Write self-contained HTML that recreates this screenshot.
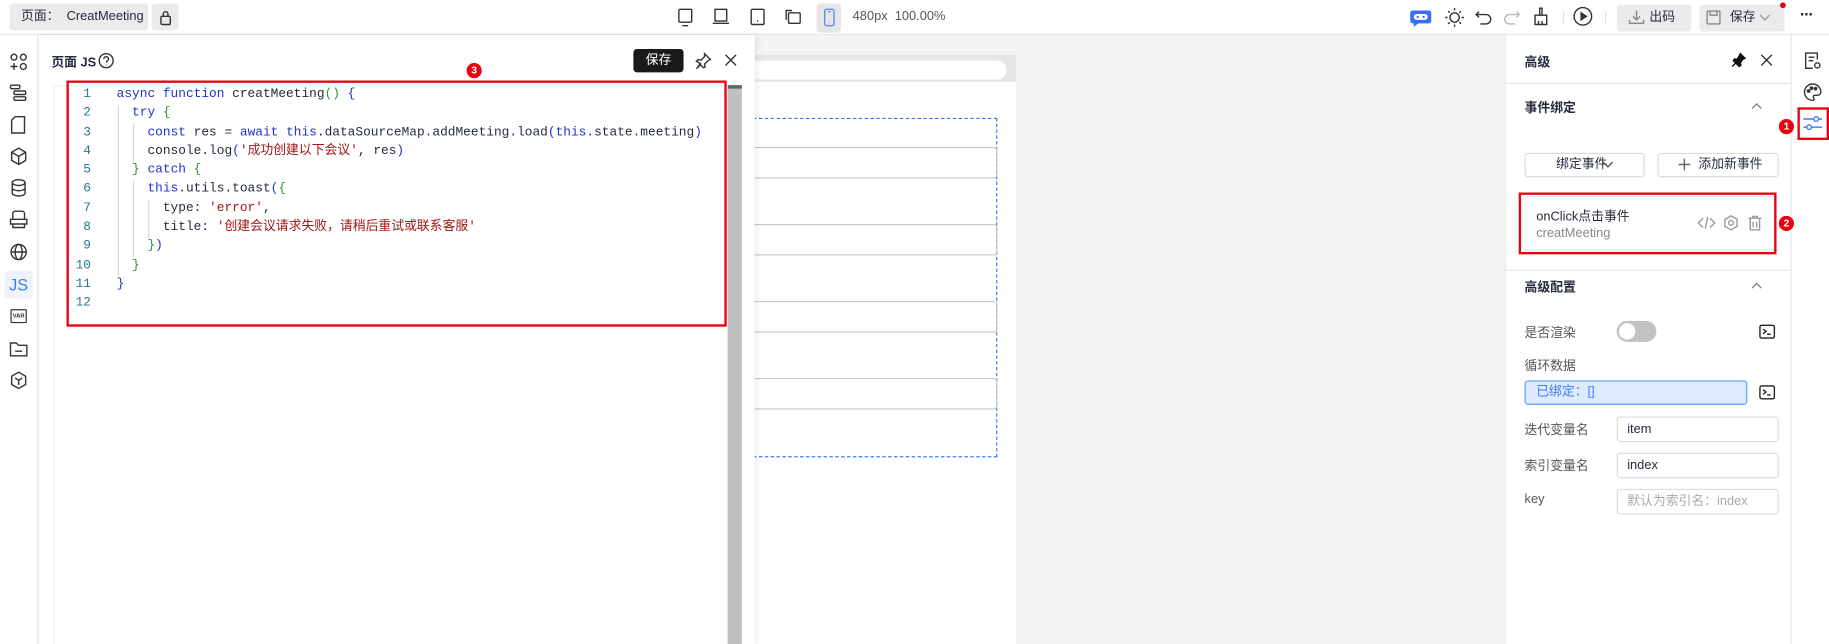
<!DOCTYPE html>
<html><head><meta charset="utf-8">
<style>
html,body{margin:0;padding:0;width:1829px;height:644px;overflow:hidden;background:#fff}
#s{position:absolute;left:0;top:0;width:1568px;height:552px;transform:scale(1.16645,1.16667);transform-origin:0 0;font-family:"Liberation Sans","Noto Sans CJK SC",sans-serif;font-size:12px;color:#252b3a}
.a{position:absolute}
svg{position:absolute;fill:none;stroke:#333;stroke-width:1.2}
.code{font-family:"Liberation Mono","Noto Sans CJK SC",monospace;font-size:11px;line-height:16.3px;white-space:pre}
.k{color:#1f32c9}.s{color:#a31515}.g{color:#319331}.ln{color:#237893;text-align:right;width:22px}
.badge{width:13px;height:13px;border-radius:50%;background:#e60012;color:#fff;font-size:9px;font-weight:bold;text-align:center;line-height:13px;border:1px solid #fff}
.inp{border:1px solid #dcdcdc;border-radius:3px;height:20px;line-height:20px;padding-left:8px;box-sizing:border-box}
.lbl{color:#555;font-size:11px}
.rb{border:2px solid #e60012;box-sizing:border-box}
</style></head><body><div id="s">
<div class="a" style="left:0;top:0;width:1568px;height:30px;border-bottom:1px solid #e6e6e6;box-sizing:border-box"></div>
<div class="a" style="left:8px;top:3px;width:119px;height:23px;background:#ebebeb;border-radius:3px;line-height:23px;font-size:11px;padding-left:10px;box-sizing:border-box">页面：&nbsp; CreatMeeting</div>
<div class="a" style="left:130px;top:3px;width:23px;height:23px;background:#ebebeb;border-radius:3px"></div>
<svg style="left:136px;top:8px" width="12" height="14"><rect x="2" y="6" width="8" height="7" rx="1"/><path d="M4 6V4a2 2 0 0 1 4 0v2"/></svg>
<svg style="left:580px;top:6px" width="16" height="18"><rect x="2" y="2" width="11" height="11" rx="1"/><path d="M5 16h5"/></svg>
<svg style="left:610px;top:6px" width="16" height="18"><rect x="3" y="2" width="10" height="10"/><path d="M1 14h14"/></svg>
<svg style="left:642px;top:6px" width="16" height="18"><rect x="2" y="2" width="11" height="13" rx="1"/><path d="M7 12h1"/></svg>
<svg style="left:672px;top:6px" width="16" height="18"><rect x="4" y="5" width="10" height="9" rx="1"/><path d="M2 11V3h5"/></svg>
<div class="a" style="left:700px;top:3px;width:21px;height:25px;background:#e6e6e6;border-radius:3px"></div>
<svg style="left:704px;top:6px;stroke:#5e8ef5" width="14" height="18"><rect x="3" y="2" width="8" height="14" rx="1.5"/><path d="M6 4h2M7 13v.5"/></svg>
<div class="a" style="left:731px;top:8px;font-size:11px;color:#555">480px&nbsp; 100.00%</div>
<svg style="left:1208px;top:5px;stroke:none" width="20" height="20"><path d="M3 4h14a2 2 0 0 1 2 2v7a2 2 0 0 1-2 2H8l-4 3v-3H3a2 2 0 0 1-2-2V6a2 2 0 0 1 2-2z" fill="#3d6cf0"/><rect x="4" y="7" width="12" height="5" rx="2.5" fill="#fff"/><circle cx="7.5" cy="9.5" r="1" fill="#3d6cf0"/><circle cx="12.5" cy="9.5" r="1" fill="#3d6cf0"/></svg>
<svg style="left:1238px;top:6px" width="18" height="18"><circle cx="9" cy="9" r="4"/><path d="M9 1v2M9 15v2M1 9h2M15 9h2M3.5 3.5l1.4 1.4M13.1 13.1l1.4 1.4M3.5 14.5l1.4-1.4M13.1 4.9l1.4-1.4"/></svg>
<svg style="left:1264px;top:7px" width="16" height="16"><path d="M4 3L1.5 5.5 4 8M1.5 5.5H10a4 4 0 0 1 0 8H5"/></svg>
<svg style="left:1288px;top:7px;stroke:#bbb" width="16" height="16"><path d="M12 3l2.5 2.5L12 8M14.5 5.5H6a4 4 0 0 0 0 8h5"/></svg>
<svg style="left:1313px;top:5px" width="16" height="18"><path d="M7 2h2v6H7zM3 8h10v8H3zM6 16v-3M9 16v-3"/></svg>
<div class="a" style="left:1340px;top:10px;width:1px;height:10px;background:#ddd"></div>
<svg style="left:1348px;top:5px" width="18" height="18"><circle cx="9" cy="9" r="7.5"/><path d="M7.5 6v6l4.5-3z" fill="#333"/></svg>
<div class="a" style="left:1376px;top:10px;width:1px;height:10px;background:#ddd"></div>
<div class="a" style="left:1386px;top:4px;width:64px;height:23px;background:#ebebeb;border-radius:3px;line-height:23px;font-size:11px;padding-left:28px;box-sizing:border-box">出码</div>
<svg style="left:1396px;top:8px;stroke:#888" width="14" height="14"><path d="M7 1v8M4 6l3 3 3-3M1 9v3h12V9"/></svg>
<div class="a" style="left:1457px;top:4px;width:73px;height:23px;background:#ebebeb;border-radius:3px;line-height:23px;font-size:11px;padding-left:26px;box-sizing:border-box">保存</div>
<svg style="left:1462px;top:8px;stroke:#888" width="14" height="14"><rect x="1.5" y="1.5" width="11" height="11" rx="1"/><path d="M4 2v3h6V2"/></svg>
<svg style="left:1507px;top:10px;stroke:#999" width="12" height="10"><path d="M2 3l4 4 4-4"/></svg>
<div class="a" style="left:1526px;top:2px;width:5px;height:5px;border-radius:50%;background:#e60012"></div>
<div class="a" style="left:1543px;top:4px;font-size:14px;font-weight:bold;letter-spacing:-1px">···</div>
<div class="a" style="left:0;top:30px;width:33px;height:522px;border-right:1px solid #e6e6e6;box-sizing:border-box"></div>
<svg style="left:8px;top:45px" width="16" height="16"><circle cx="4" cy="4" r="2.5"/><circle cx="12" cy="4" r="2.5"/><circle cx="12" cy="12" r="2.5"/><path d="M4 9v6M1 12h6"/></svg>
<svg style="left:8px;top:72px" width="16" height="16"><rect x="1" y="1" width="8" height="3" rx="1"/><rect x="4" y="6" width="10" height="3" rx="1"/><rect x="4" y="11" width="10" height="3" rx="1"/></svg>
<svg style="left:8px;top:99px" width="16" height="16"><path d="M2 4l3-3h8v14H2z"/></svg>
<svg style="left:8px;top:126px" width="16" height="16"><path d="M8 1l6 3.5v7L8 15l-6-3.5v-7zM2 4.5L8 8l6-3.5M8 8v7"/></svg>
<svg style="left:8px;top:153px" width="16" height="16"><ellipse cx="8" cy="3.5" rx="5.5" ry="2.5"/><path d="M2.5 3.5v9c0 1.4 2.5 2.5 5.5 2.5s5.5-1.1 5.5-2.5v-9M2.5 8c0 1.4 2.5 2.5 5.5 2.5s5.5-1.1 5.5-2.5"/></svg>
<svg style="left:8px;top:180px" width="16" height="16"><path d="M3 8V3a2 2 0 0 1 2-2h6a2 2 0 0 1 2 2v5M1 8h14v4H1zM3 12v3h10v-3"/></svg>
<svg style="left:8px;top:208px" width="16" height="16"><circle cx="8" cy="8" r="6.5"/><ellipse cx="8" cy="8" rx="3" ry="6.5"/><path d="M1.5 8h13"/></svg>
<div class="a" style="left:4px;top:232px;width:24px;height:24px;background:#eef2fb;border-radius:3px;color:#3d7cf0;font-size:14px;line-height:24px;text-align:center">JS</div>
<div class="a" style="left:9px;top:265px;width:12px;height:10px;border:1px solid #333;border-radius:1px;font-size:5px;line-height:10px;text-align:center;font-weight:bold">VAR</div>
<svg style="left:8px;top:291px" width="16" height="16"><path d="M1 3h5l2 2h7v9H1zM5 10h6"/></svg>
<svg style="left:8px;top:318px" width="16" height="16"><path d="M8 1l6 3.5v7L8 15l-6-3.5v-7zM5 6l3 2 3-2M8 8v4"/></svg>
<div class="a" style="left:647px;top:30px;width:643px;height:522px;background:#f4f4f4"></div>
<div class="a" style="left:560px;top:47px;width:311px;height:505px;background:#fff"></div>
<div class="a" style="left:560px;top:47px;width:311px;height:23px;background:#e6e6e6"></div>
<div class="a" style="left:560px;top:52px;width:303px;height:16px;background:#fff;border-radius:8px"></div>
<div class="a" style="left:560px;top:101px;width:295px;height:291px;border:1px dashed #3d7cf0;box-sizing:border-box"></div>
<div class="a" style="left:560px;top:126px;width:295px;height:27px;border:1px solid #c8c8c8;border-radius:3px;box-sizing:border-box"></div>
<div class="a" style="left:560px;top:192px;width:295px;height:27px;border:1px solid #c8c8c8;border-radius:3px;box-sizing:border-box"></div>
<div class="a" style="left:560px;top:258px;width:295px;height:27px;border:1px solid #c8c8c8;border-radius:3px;box-sizing:border-box"></div>
<div class="a" style="left:560px;top:324px;width:295px;height:27px;border:1px solid #c8c8c8;border-radius:3px;box-sizing:border-box"></div>
<div class="a" style="left:34px;top:30px;width:613px;height:522px;background:#fff;box-shadow:2px 0 6px rgba(0,0,0,.08)"></div>
<div class="a" style="left:44px;top:45px;font-size:11px;font-weight:bold">页面 JS</div>
<svg style="left:84px;top:45px" width="14" height="14"><circle cx="7" cy="7" r="6"/><path d="M5 5.5a2 2 0 1 1 2.5 2v1.2M7 10.5v.5"/></svg>
<div class="a" style="left:543px;top:42px;width:43px;height:20px;background:#1a1a1a;border-radius:3px;color:#fff;font-size:11px;line-height:20px;text-align:center">保存</div>
<svg style="left:596px;top:45px" width="14" height="14"><path d="M8 1l5 5-2 1-3 3 .5 2.5L7 13 4.5 10.5 1 14l3.5-4.5L1 7.5 2.5 6 5 6.5l3-3z"/></svg>
<svg style="left:620px;top:45px" width="13" height="13"><path d="M2 2l9 9M11 2l-9 9"/></svg>
<div class="a" style="left:46px;top:73px;width:578px;height:479px;border:1px solid #eee;border-bottom:none;box-sizing:border-box"></div>
<div class="a" style="left:624px;top:73px;width:12px;height:479px;background:#c1c1c1"></div>
<div class="a" style="left:624px;top:73px;width:12px;height:3px;background:#666"></div>
<div class="a" style="left:101px;top:90px;width:1px;height:146px;background:#d8d8d8"></div>
<div class="a" style="left:114px;top:106px;width:1px;height:33px;background:#d8d8d8"></div>
<div class="a" style="left:114px;top:155px;width:1px;height:65px;background:#d8d8d8"></div>
<div class="a" style="left:127px;top:171px;width:1px;height:33px;background:#d8d8d8"></div>
<div class="a code" style="left:56px;top:73px"><div class="ln">1
2
3
4
5
6
7
8
9
10
11
12</div></div>
<div class="a code" style="left:100px;top:73px"><span class="k">async function</span> creatMeeting<span class="g">()</span> <span class="k">{</span>
  <span class="k">try</span> <span class="g">{</span>
    <span class="k">const</span> res = <span class="k">await this</span>.dataSourceMap.addMeeting.load<span class="k">(this</span>.state.meeting<span class="k">)</span>
    console.log<span class="k">(</span><span class="s">'成功创建以下会议'</span>, res<span class="k">)</span>
  <span class="g">}</span> <span class="k">catch</span> <span class="g">{</span>
    <span class="k">this</span>.utils.toast<span class="k">(</span><span class="g">{</span>
      type: <span class="s">'error'</span>,
      title: <span class="s">'创建会议请求失败，请稍后重试或联系客服'</span>
    <span class="g">}</span><span class="k">)</span>
  <span class="g">}</span>
<span class="k">}</span>
</div>
<div class="a rb" style="left:57px;top:69px;width:566px;height:211px"></div>
<div class="a badge" style="left:399px;top:53px">3</div>
<div class="a" style="left:1290px;top:30px;width:246px;height:522px;border-left:1px solid #e6e6e6;border-right:1px solid #e6e6e6;box-sizing:border-box"></div>
<div class="a" style="left:1307px;top:45px;font-size:11px;font-weight:bold">高级</div>
<svg style="left:1484px;top:45px;stroke:#111" width="13" height="13"><path d="M8 1l4 4-2 1-2 3 .5 2L7 12 2 7l1-1.5 2 .5 2-3z" fill="#111"/><path d="M4 9l-3 3"/></svg>
<svg style="left:1509px;top:46px" width="11" height="11"><path d="M1 1l9 9M10 1l-9 9"/></svg>
<div class="a" style="left:1291px;top:71px;width:244px;height:1px;background:#e6e6e6"></div>
<div class="a" style="left:1307px;top:84px;font-size:11px;font-weight:bold">事件绑定</div>
<svg style="left:1500px;top:86px;stroke:#888" width="12" height="10"><path d="M2 7l4-4 4 4"/></svg>
<div class="a" style="left:1307px;top:131px;width:103px;height:21px;border:1px solid #dcdcdc;border-radius:3px;box-sizing:border-box;font-size:11px;line-height:19px;padding-left:26px">绑定事件</div>
<svg style="left:1373px;top:136px;stroke:#555" width="11" height="10"><path d="M1.5 3l4 4 4-4"/></svg>
<div class="a" style="left:1421px;top:131px;width:104px;height:21px;border:1px solid #dcdcdc;border-radius:3px;box-sizing:border-box;font-size:11px;line-height:19px;padding-left:34px">添加新事件</div>
<svg style="left:1438px;top:135px;stroke:#666" width="12" height="12"><path d="M6 1v10M1 6h10"/></svg>
<div class="a" style="left:1307px;top:168px;width:218px;height:1px;background:#e6e6e6"></div>
<div class="a" style="left:1307px;top:214px;width:218px;height:1px;background:#e6e6e6"></div>
<div class="a" style="left:1317px;top:177px;font-size:11px">onClick点击事件</div>
<div class="a" style="left:1317px;top:194px;font-size:11px;color:#888">creatMeeting</div>
<svg style="left:1455px;top:184px;stroke:#999" width="16" height="14"><path d="M5 3L1 7l4 4M11 3l4 4-4 4M9 2L7 12"/></svg>
<svg style="left:1477px;top:184px;stroke:#999" width="14" height="14"><path d="M7 1l5.2 3v6L7 13l-5.2-3V4z"/><circle cx="7" cy="7" r="2"/></svg>
<svg style="left:1498px;top:184px;stroke:#999" width="13" height="14"><path d="M1 3h11M4.5 3V1.5h4V3M2.5 3v10h8V3M5 6v5M8 6v5"/></svg>
<div class="a rb" style="left:1302px;top:165px;width:221px;height:53px"></div>
<div class="a badge" style="left:1524px;top:184px">2</div>
<div class="a" style="left:1291px;top:231px;width:244px;height:1px;background:#e6e6e6"></div>
<div class="a" style="left:1307px;top:238px;font-size:11px;font-weight:bold">高级配置</div>
<svg style="left:1500px;top:240px;stroke:#888" width="12" height="10"><path d="M2 7l4-4 4 4"/></svg>
<div class="a lbl" style="left:1307px;top:277px">是否渲染</div>
<div class="a" style="left:1386px;top:275px;width:34px;height:18px;border-radius:9px;background:#c2c2c2"></div>
<div class="a" style="left:1388px;top:277px;width:14px;height:14px;border-radius:50%;background:#fff"></div>
<svg style="left:1508px;top:278px;stroke:#222" width="14" height="13"><rect x="0.8" y="0.8" width="12.4" height="11" rx="1.5"/><path d="M3.5 4l2.5 2-2.5 2M7 8.5h3"/></svg>
<div class="a lbl" style="left:1307px;top:305px">循环数据</div>
<div class="a" style="left:1307px;top:326px;width:191px;height:21px;background:#deebff;border:1px solid #5e9cf5;border-radius:3px;box-sizing:border-box;color:#3d7cf0;font-size:11px;line-height:19px;padding-left:9px">已绑定：[]</div>
<svg style="left:1508px;top:330px;stroke:#222" width="14" height="13"><rect x="0.8" y="0.8" width="12.4" height="11" rx="1.5"/><path d="M3.5 4l2.5 2-2.5 2M7 8.5h3"/></svg>
<div class="a lbl" style="left:1307px;top:360px">迭代变量名</div>
<div class="a inp" style="left:1386px;top:357px;width:139px;height:22px;line-height:20px;font-size:11px">item</div>
<div class="a lbl" style="left:1307px;top:391px">索引变量名</div>
<div class="a inp" style="left:1386px;top:388px;width:139px;height:22px;line-height:20px;font-size:11px">index</div>
<div class="a lbl" style="left:1307px;top:422px">key</div>
<div class="a inp" style="left:1386px;top:419px;width:139px;height:22px;line-height:20px;font-size:11px;color:#aaa">默认为索引名：index</div>
<svg style="left:1546px;top:44px" width="16" height="16"><path d="M12 7V1.5H2v13h6M4.5 5h5M4.5 8h4"/><circle cx="12" cy="12" r="2.2"/></svg>
<svg style="left:1546px;top:71px" width="16" height="16"><path d="M8 1a7 7 0 0 0 0 14c1.5 0 1.5-1.5.8-2.3-.7-.8 0-2 1-2H12a3 3 0 0 0 3-3A7 7 0 0 0 8 1z"/><circle cx="4.5" cy="7" r="1" fill="#333"/><circle cx="7" cy="4.5" r="1" fill="#333"/><circle cx="10.5" cy="5" r="1" fill="#333"/></svg>
<svg style="left:1545px;top:98px;stroke:#3d7cf0" width="18" height="16"><path d="M1 4h16M1 11h16"/><circle cx="12" cy="4" r="2" fill="#fff"/><circle cx="6" cy="11" r="2" fill="#fff"/></svg>
<div class="a rb" style="left:1541px;top:92px;width:27px;height:28px"></div>
<div class="a badge" style="left:1524px;top:101px">1</div>
</div></body></html>
